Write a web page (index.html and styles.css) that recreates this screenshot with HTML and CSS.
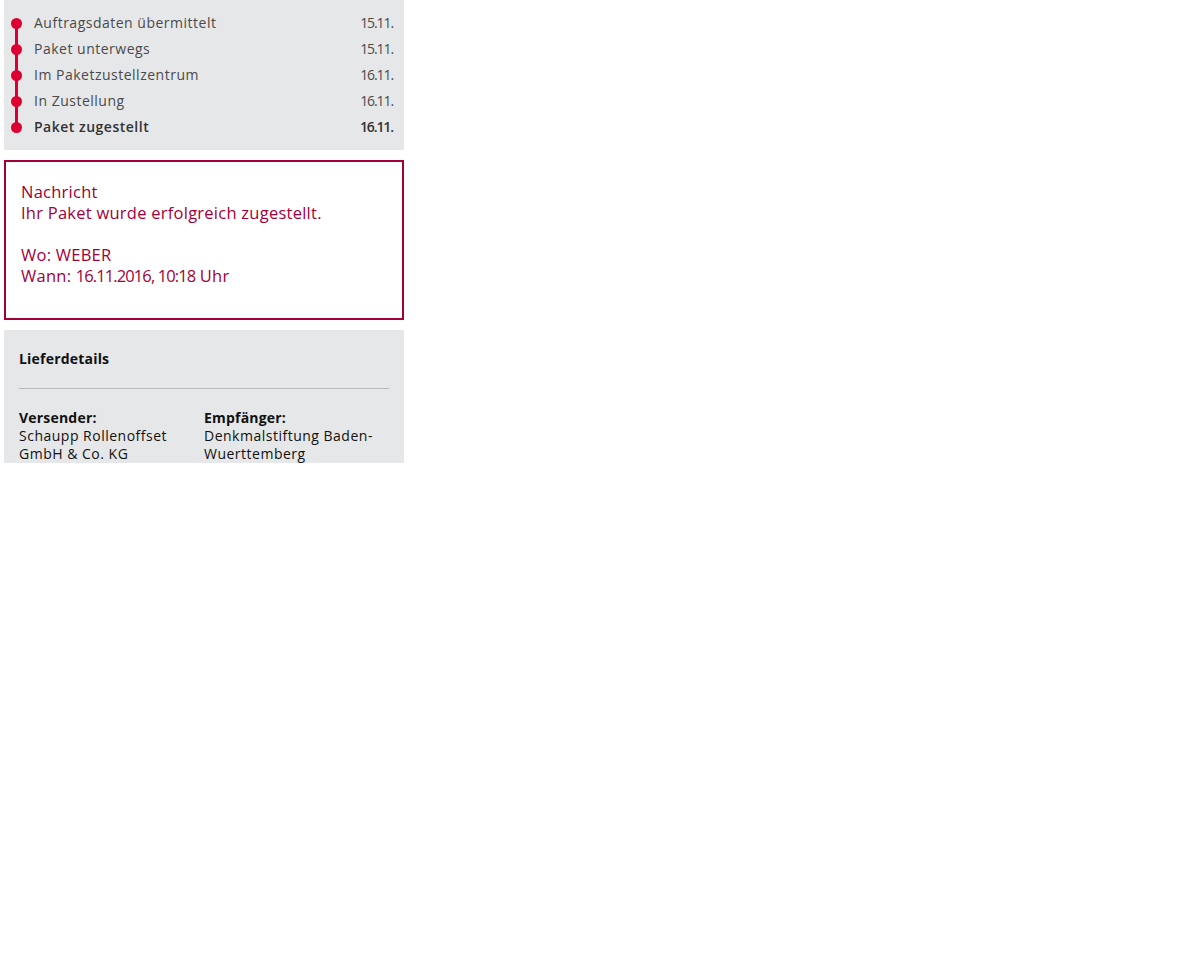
FILE: index.html
```html
<!DOCTYPE html>
<html lang="de">
<head>
<meta charset="utf-8">
<title>Sendungsverfolgung</title>
<link rel="stylesheet" href="styles.css">
</head>
<body>
<div class="tracking">
  <section class="status-box">
    <ol class="timeline">
      <li class="step"><span class="step-label">Auftragsdaten übermittelt</span><span class="step-date">15.11.</span></li>
      <li class="step"><span class="step-label">Paket unterwegs</span><span class="step-date">15.11.</span></li>
      <li class="step"><span class="step-label">Im Paketzustellzentrum</span><span class="step-date">16.11.</span></li>
      <li class="step"><span class="step-label">In Zustellung</span><span class="step-date">16.11.</span></li>
      <li class="step step-current"><span class="step-label">Paket zugestellt</span><span class="step-date">16.11.</span></li>
    </ol>
  </section>

  <section class="message-box">
    <p class="message-title">Nachricht</p>
    <p class="message-line">Ihr Paket wurde erfolgreich zugestellt.</p>
    <p class="message-line message-gap">Wo: WEBER</p>
    <p class="message-line">Wann: <span class="message-time">16.11.2016, 10:18</span> Uhr</p>
  </section>

  <section class="details-box">
    <h2 class="details-title">Lieferdetails</h2>
    <hr class="details-rule">
    <div class="details-grid">
      <div class="party">
        <div class="party-label">Versender:</div>
        <div class="party-name">Schaupp Rollenoffset GmbH &amp; Co. KG</div>
      </div>
      <div class="party">
        <div class="party-label">Empfänger:</div>
        <div class="party-name">Denkmalstiftung Baden-Wuerttemberg</div>
      </div>
    </div>
  </section>
</div>
</body>
</html>
```

FILE: styles.css
```css
html, body {
  margin: 0;
  padding: 0;
  background: #ffffff;
}

body {
  font-family: "Open Sans", "Liberation Sans", sans-serif;
  color: #414042;
}

.tracking {
  width: 400px;
  padding: 0 4px;
  display: flex;
  flex-direction: column;
  gap: 10px;
}

/* status timeline */
.status-box {
  background: #e6e7e8;
  padding: 10px 10px 10px 0;
}

.timeline {
  list-style: none;
  margin: 0;
  padding: 0;
}

.step {
  position: relative;
  display: flex;
  justify-content: space-between;
  align-items: center;
  height: 26px;
  padding-left: 30px;
  font-size: 14px;
  line-height: 26px;
  letter-spacing: 0.5px;
  color: #4a4a4c;
}

/* narrow figures for the dates */
.step-date {
  letter-spacing: -1.1px;
  margin-right: 1px;
}

.step::before {
  content: "";
  position: absolute;
  left: 6.5px;
  top: 7.5px;
  width: 11px;
  height: 11px;
  border-radius: 50%;
  background: #dc0032;
  z-index: 1;
}

.step::after {
  content: "";
  position: absolute;
  left: 11px;
  top: 13px;
  width: 3px;
  height: 26px;
  background: #dc0032;
}

.step:last-child::after {
  display: none;
}

.step-current {
  font-weight: 600;
  color: #323233;
}

/* delivery message */
.message-box {
  border: 2px solid #a3003a;
  padding: 19px 15px 32px;
  color: #a3003a;
  font-size: 16.5px;
  line-height: 21px;
  letter-spacing: 0.25px;
}

.message-box p {
  margin: 0;
}

.message-title {
  color: #9a0036;
}

.message-gap {
  margin-top: 21px !important;
}

.message-time {
  letter-spacing: -0.9px;
}

/* delivery details */
.details-box {
  background: #e6e7e8;
  padding: 20px 15px 0;
  color: #111111;
  font-size: 14px;
  line-height: 18px;
  letter-spacing: 0.5px;
}

.details-title {
  margin: 0;
  font-size: 14px;
  line-height: 18px;
  font-weight: 700;
  letter-spacing: 0.2px;
}

.details-rule {
  margin: 20px 0 20px;
  border: 0;
  height: 1px;
  background: #b9babb;
}

.details-grid {
  display: grid;
  grid-template-columns: 185px 185px;
}

.party-label {
  font-weight: 700;
  letter-spacing: 0.2px;
}

.party-name {
  padding-right: 8px;
}
```
